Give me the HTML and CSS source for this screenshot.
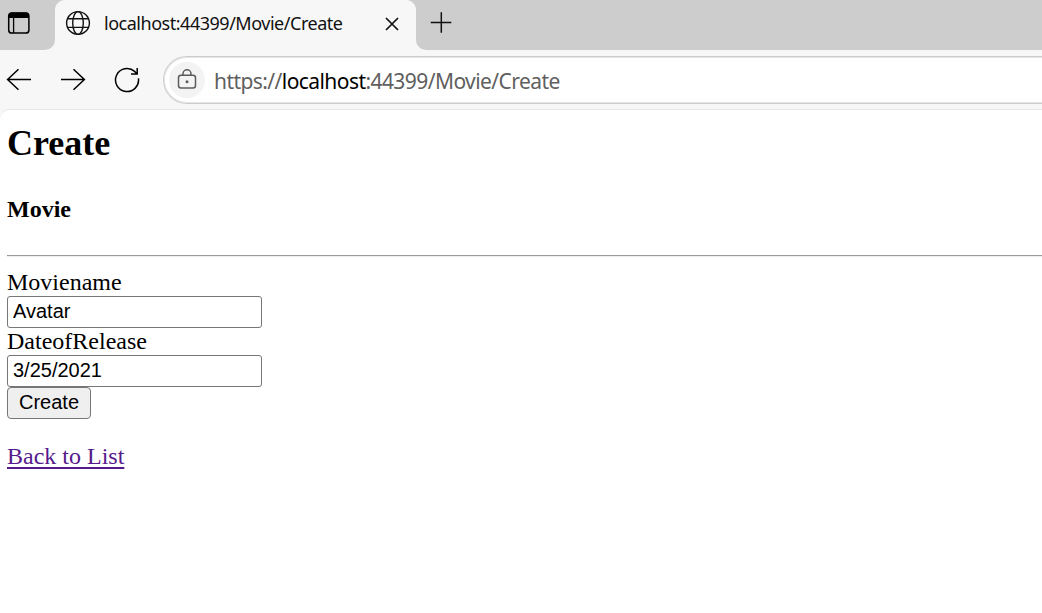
FILE: index.html
```html
<!DOCTYPE html>
<html lang="en">
<head>
<meta charset="utf-8">
<title>localhost:44399/Movie/Create</title>
<link rel="stylesheet" href="styles.css">
</head>
<body>
<header class="browser">
  <div class="tabstrip">
    <div class="workspace">
      <svg class="icon-panel" width="24" height="24" viewBox="0 0 24 24"><rect x="1.7" y="1.9" width="20.2" height="20.2" rx="3.2" fill="none" stroke="#000" stroke-width="1.5"/><path d="M1.5 7V5Q1.5 1.5 5 1.5H19Q22 1.5 22 5V7Z"/><path d="M6.6 7V22" stroke="#000" stroke-width="1.3"/></svg>
    </div>
    <div class="tab">
      <svg class="icon-globe" width="26" height="26" viewBox="0 0 26 26" fill="none" stroke="#111" stroke-width="1.4"><circle cx="13" cy="13" r="11.4"/><ellipse cx="13" cy="13" rx="5.3" ry="11.4"/><path d="M2.6 8.7H23.4M2.6 17.4H23.4"/></svg>
      <span class="tab-title">localhost:44399/Movie/Create</span>
      <svg class="icon-close" width="14" height="14" viewBox="0 0 14 14"><path d="M1 1L13 13M13 1L1 13" fill="none" stroke="#111" stroke-width="1.7"/></svg>
    </div>
    <div class="newtab">
      <svg width="22" height="22" viewBox="0 0 22 22"><path d="M.7 10.5H21.3M11.3 .3V20.8" fill="none" stroke="#111" stroke-width="1.5"/></svg>
    </div>
  </div>
  <div class="toolbar">
    <svg class="arrow" width="26" height="26" viewBox="0 0 26 26"><path d="M25 12.5H1.5M12.5 2.3L1.6 12.5L12.5 22.7" fill="none" stroke="#000" stroke-width="1.5"/></svg>
    <svg class="arrow" width="26" height="26" viewBox="0 0 26 26"><path d="M1 12.5H24.5M13.5 2.3L24.4 12.5L13.5 22.7" fill="none" stroke="#000" stroke-width="1.5"/></svg>
    <svg class="reload" width="26" height="26" viewBox="0 0 26 26"><path d="M24.4 11.3A11.5 11.5 0 1 1 20.6 4.4L23.2 7.1M23.2 1V7.1H17" fill="none" stroke="#000" stroke-width="1.5"/></svg>
    <div class="address">
      <span class="lock"><svg width="20" height="22" viewBox="0 0 20 22"><g fill="none" stroke="#5c5c5c" stroke-width="1.5"><rect x="1.5" y="6.2" width="17" height="12.9" rx="2.5"/><path d="M6 6.2V4.8A4 4 0 0 1 14 4.8V6.2"/></g><circle cx="10" cy="12.8" r="1.5" fill="#5c5c5c"/></svg></span>
      <span class="url">https://<b>localhost</b>:44399/Movie/Create</span>
    </div>
  </div>
</header>
<main class="page">
  <h2>Create</h2>
  <h4>Movie</h4>
  <hr>
  <form>
    <label for="name">Moviename</label>
    <input id="name" type="text" value="Avatar">
    <label for="date">DateofRelease</label>
    <input id="date" type="text" value="3/25/2021">
    <button type="button">Create</button>
  </form>
  <a href="#">Back to List</a>
</main>
</body>
</html>
```
FILE: styles.css
```css
* { box-sizing: border-box; }
body { margin: 0; height: 613px; overflow: hidden; background: #f7f7f7; }
svg { display: block; flex: none; }

.browser { height: 109px; font-family: "Noto Sans", "Open Sans", sans-serif; }
.tabstrip { display: flex; height: 50px; background: #f7f7f7; }
.workspace { width: 55px; padding: 11px 0 0 7px; background: #cdcdcd; border-bottom-right-radius: 10px; }
.tab {
  display: flex; align-items: center; width: 361px; height: 50px;
  padding: 0 17px 4px 10px;
  background: radial-gradient(circle at 10px 10px, #f7f7f7 9.5px, #cdcdcd 10.5px) 0 0 / 10px 10px no-repeat,
    radial-gradient(circle at 0 10px, #f7f7f7 9.5px, #cdcdcd 10.5px) 100% 0 / 10px 10px no-repeat, #f7f7f7;
}
.tab-title { flex: 1; margin: 0 0 1px 13px; font-size: 18px; letter-spacing: -0.48px; white-space: nowrap; color: #111; }
.icon-close { margin-top: 2px; }
.newtab { flex: 1; padding: 12px 0 0 14px; background: #cdcdcd; border-bottom-left-radius: 10px; }

.toolbar { display: flex; align-items: center; height: 59px; padding-left: 6px; gap: 28px; }
.reload { margin-top: 1px; }
.address {
  display: flex; align-items: center; flex: 1; height: 48px; margin: 1px -2px 0 -5px; padding-left: 5px;
  background: #fff; border: 1px solid #cdcdcd; border-right: 0; border-radius: 24px 0 0 24px;
  box-shadow: inset 0 0 0 1px #e6e6e6;
}
.lock { display: flex; align-items: center; justify-content: center; width: 36px; height: 36px; border-radius: 50%; background: #f3f3f3; }
.url { margin: 1px 0 0 9px; font-size: 21px; letter-spacing: -0.57px; white-space: nowrap; color: #606060; }
.url b { font-weight: 400; color: #000; }

.page {
  height: 504px; padding: 13px 0 0 7px; border-top: 1px solid #e8e8e8; border-top-left-radius: 10px;
  background: #fff; color: #000; font: 24px/27px "Liberation Serif", serif;
}
h2 { margin: 0 0 31px; font-size: 36px; line-height: 41px; }
h4 { margin: 0 0 32px; font-size: 24px; line-height: 28px; }
hr { height: 2px; margin: 0 0 12px; border: 0; border-top: 1px solid #9a9a9a; border-bottom: 1px solid #eee; }
form { display: flex; flex-direction: column; align-items: flex-start; margin-bottom: 24px; }
input {
  width: 255px; height: 32px; margin: 0; padding: 0 4px 1px 5px; border: 1px solid #767676; border-radius: 3px;
  background: #fff; color: #000; font: 20px "Liberation Sans", sans-serif;
}
button {
  width: 84px; height: 32px; margin: 0; padding: 0 0 1px; border: 1px solid #767676; border-radius: 4px;
  background: #efefef; color: #000; font: 20px "Liberation Sans", sans-serif;
}
a { color: #551a8b; text-decoration: underline; text-decoration-thickness: 2px; text-underline-offset: 3px; }
```
